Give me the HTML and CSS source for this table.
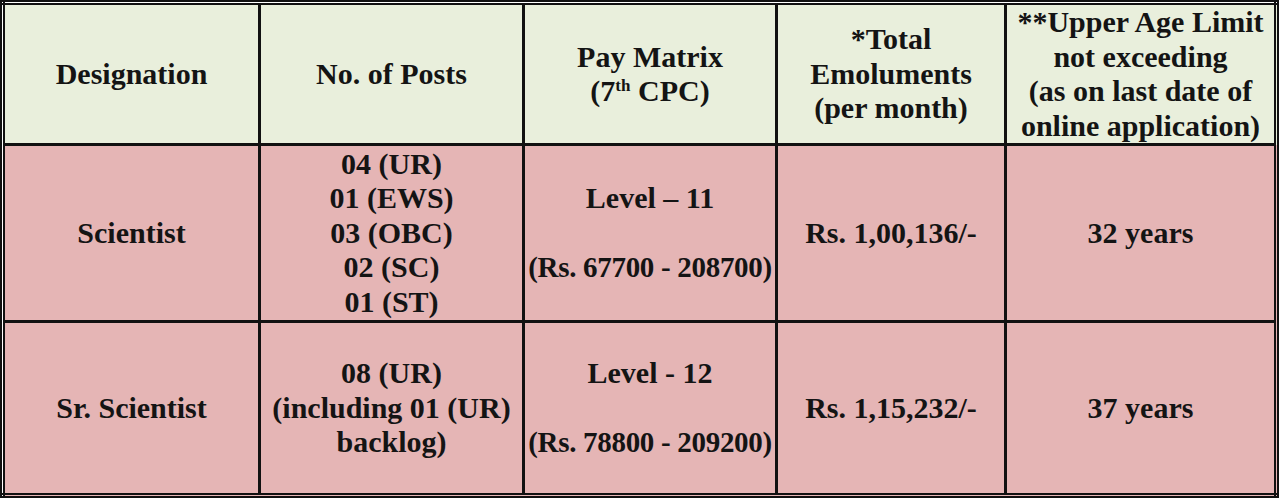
FILE: index.html
```html
<!DOCTYPE html>
<html lang="en">
<head>
<meta charset="utf-8">
<title>Posts</title>
<link rel="stylesheet" href="styles.css">
</head>
<body>
<table class="posts">
  <colgroup>
    <col class="c1"><col class="c2"><col class="c3"><col class="c4"><col class="c5">
  </colgroup>
  <thead>
    <tr class="head">
      <th>Designation</th>
      <th>No. of Posts</th>
      <th>Pay Matrix<br>(7<sup>th</sup> CPC)</th>
      <th>*Total<br>Emoluments<br>(per month)</th>
      <th>**Upper Age Limit<br>not exceeding<br>(as on last date of<br>online application)</th>
    </tr>
  </thead>
  <tbody>
    <tr class="r1">
      <td>Scientist</td>
      <td>04 (UR)<br>01 (EWS)<br>03 (OBC)<br>02 (SC)<br>01 (ST)</td>
      <td class="pay">Level – 11<br>&nbsp;<br><span class="range">(Rs. 67700 - 208700)</span></td>
      <td>Rs. 1,00,136/-</td>
      <td>32 years</td>
    </tr>
    <tr class="r2">
      <td>Sr. Scientist</td>
      <td>08 (UR)<br>(including 01 (UR)<br>backlog)</td>
      <td class="pay">Level - 12<br>&nbsp;<br><span class="range">(Rs. 78800 - 209200)</span></td>
      <td>Rs. 1,15,232/-</td>
      <td>37 years</td>
    </tr>
  </tbody>
</table>
</body>
</html>
```

FILE: styles.css
```css
html, body {
  margin: 0;
  padding: 0;
  background: #ffffff;
}

.posts {
  width: 1276px;
  table-layout: fixed;
  border-collapse: collapse;
  border: 5px double #111;
  font-family: "Liberation Serif", "Times New Roman", serif;
  font-weight: bold;
  font-size: 30px;
  line-height: 34.5px;
  color: #141414;
}

.c1 { width: 257px; }
.c2 { width: 264px; }
.c3 { width: 253px; }
.c4 { width: 229px; }
.c5 { width: 271px; }

.posts th,
.posts td {
  border: 3px solid #111;
  padding: 0;
  text-align: center;
  vertical-align: middle;
  font-weight: bold;
}

.head th {
  background: #e9efdc;
}

.head { height: 142px; }
.r1 { height: 177px; }
.r2 { height: 174px; }

.r1 td, .r2 td {
  background: #e5b5b5;
}

.range {
  white-space: nowrap;
  font-size: 29px;
  letter-spacing: -0.3px;
}

.posts sup {
  font-size: 17px;
  line-height: 0;
  vertical-align: 10px;
}
```
